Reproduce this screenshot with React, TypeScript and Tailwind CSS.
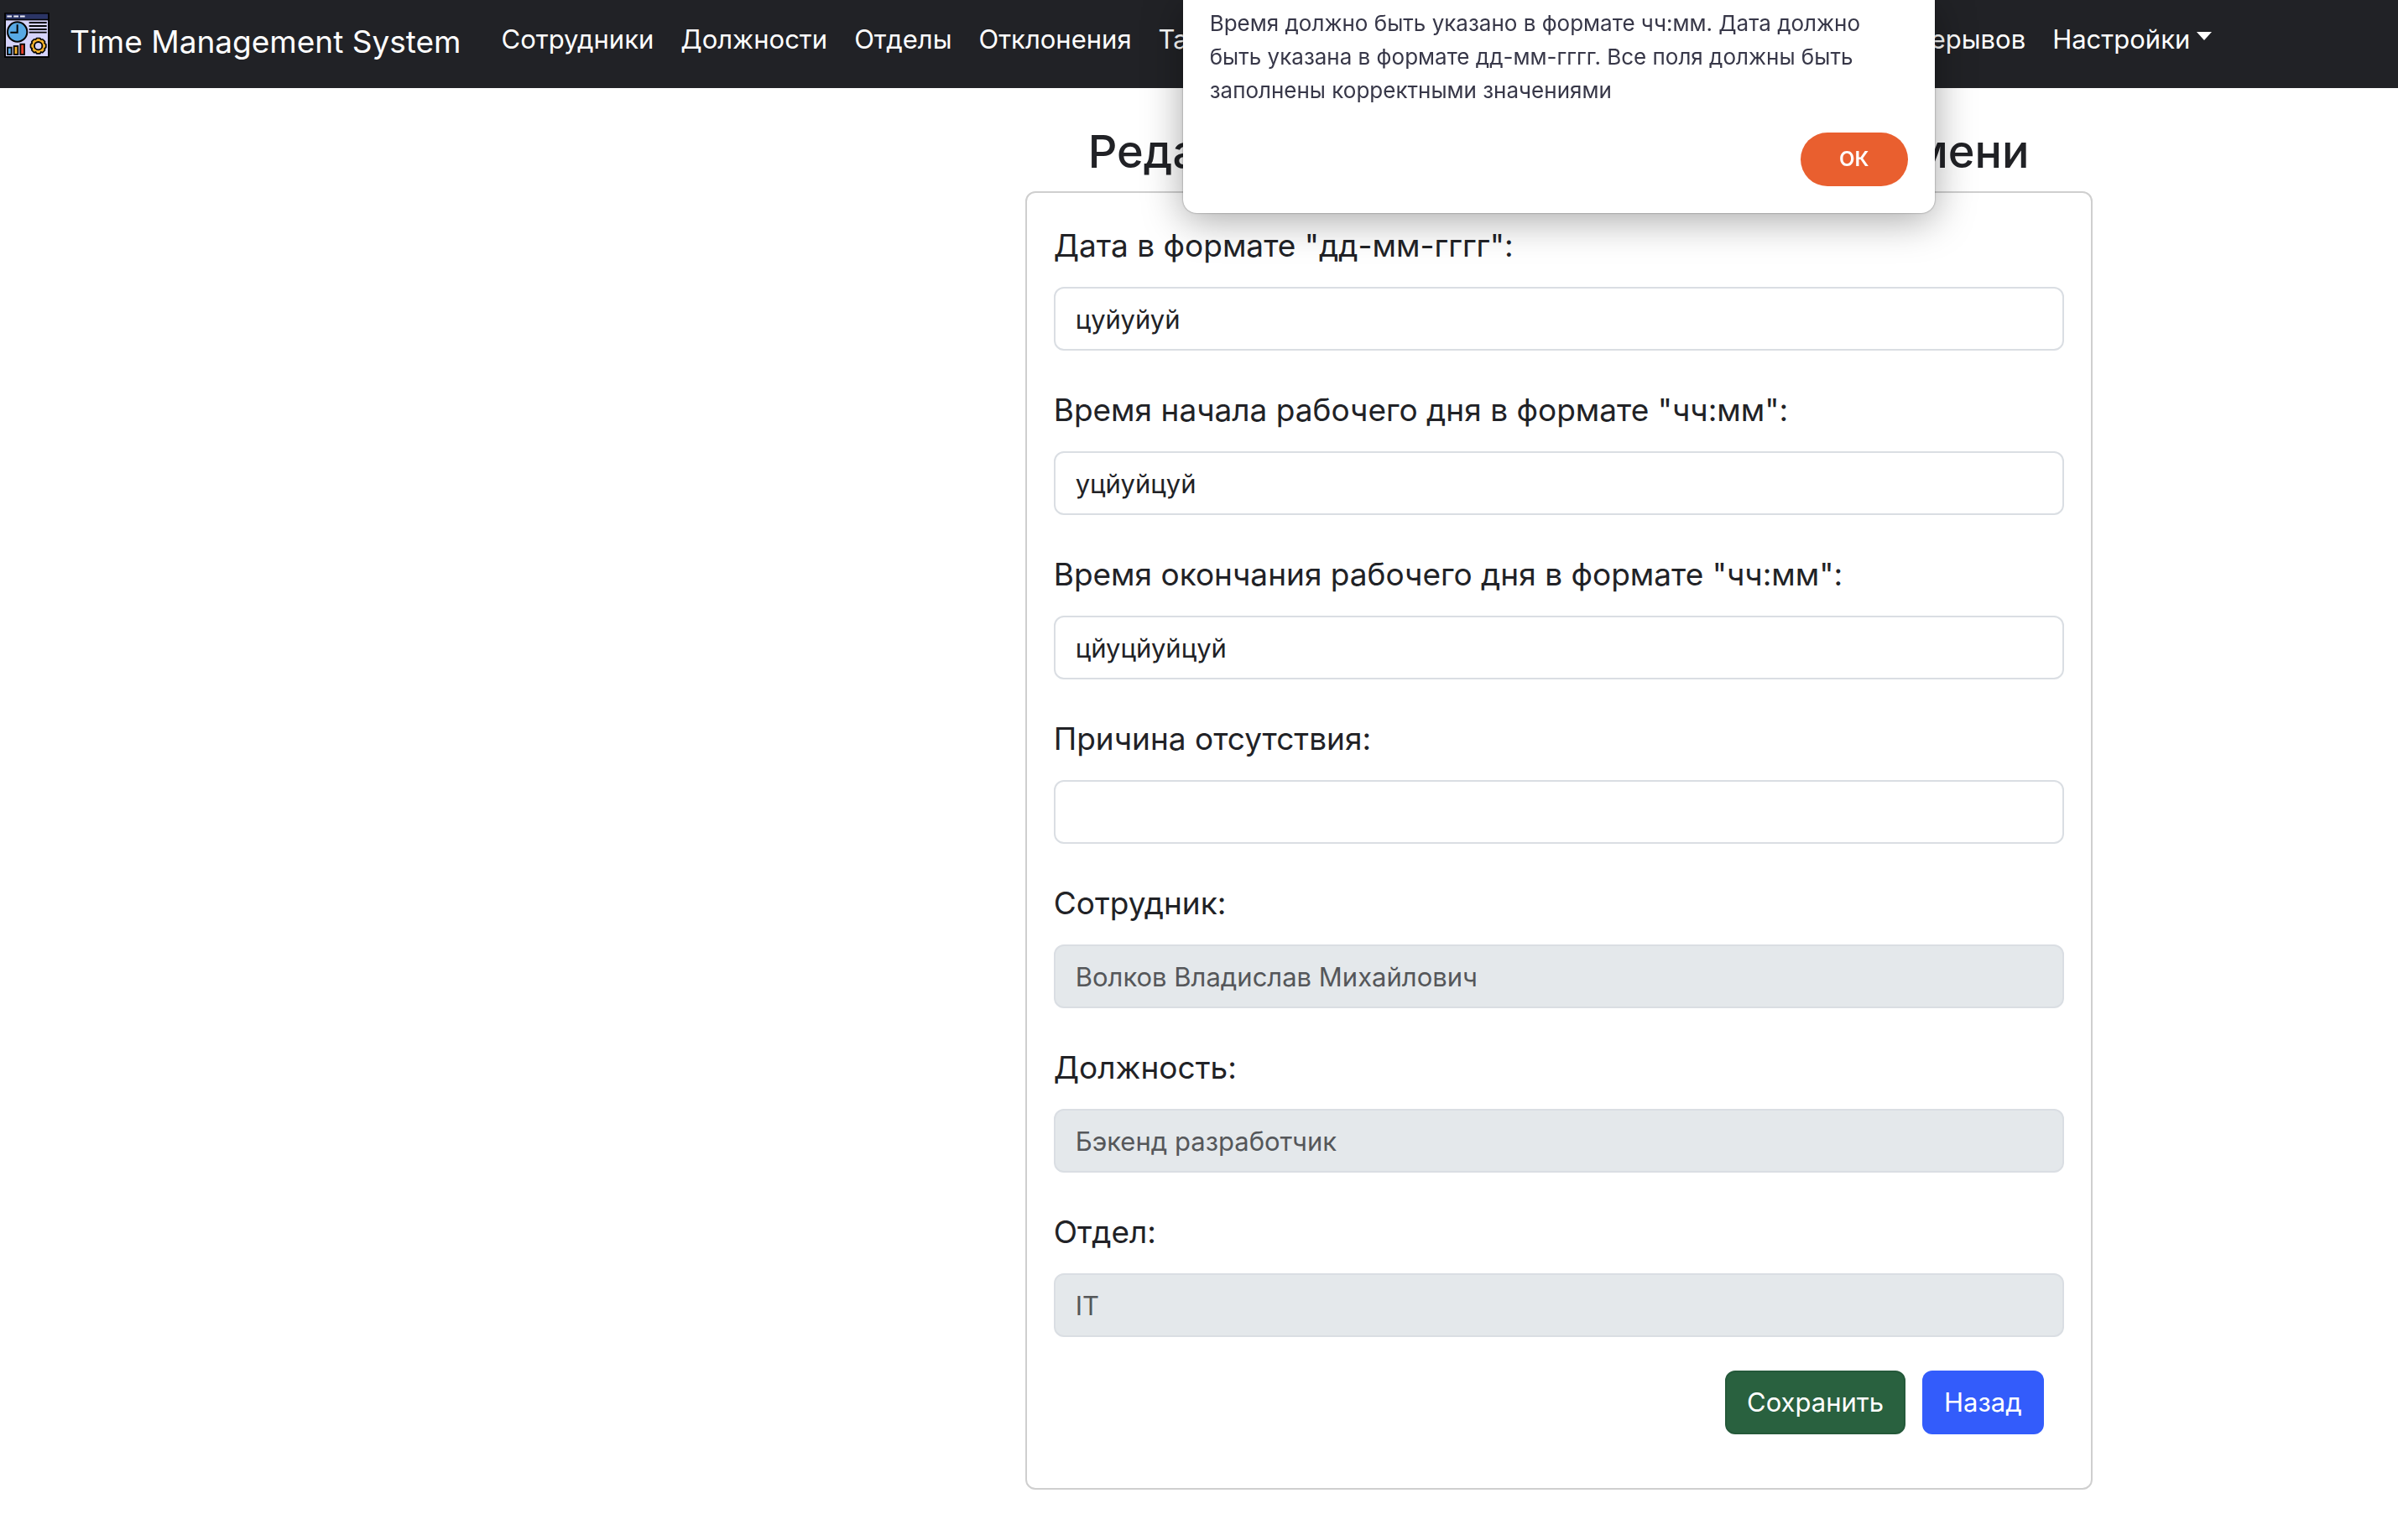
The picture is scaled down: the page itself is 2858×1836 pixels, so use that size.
import { useId, useState } from "react";

const navItems = [
  "Сотрудники",
  "Должности",
  "Отделы",
  "Отклонения",
  "Табель",
  "Графики работы",
  "Причины отклонений",
  "Виды перерывов",
];

const fields = [
  { label: 'Дата в формате "дд-мм-гггг":', value: "цуйуйуй", disabled: false },
  { label: 'Время начала рабочего дня в формате "чч:мм":', value: "уцйуйцуй", disabled: false },
  { label: 'Время окончания рабочего дня в формате "чч:мм":', value: "цйуцйуйцуй", disabled: false },
  { label: "Причина отсутствия:", value: "", disabled: false },
  { label: "Сотрудник:", value: "Волков Владислав Михайлович", disabled: true },
  { label: "Должность:", value: "Бэкенд разработчик", disabled: true },
  { label: "Отдел:", value: "IT", disabled: true },
];

const gearTeeth = [0, 45, 90, 135, 180, 225, 270, 315];

function Logo() {
  return (
    <svg viewBox="15 15 162 162" className="size-[54px] shrink-0" aria-hidden="true">
      <rect x="15" y="15" width="162" height="162" rx="3" fill="#050505" />
      <rect x="21" y="20" width="150" height="18" fill="#2b3566" />
      <rect x="21" y="43" width="150" height="128" fill="#d5d3fb" />
      <path d="M25 28.500h17M49 28.500h17M72 28.500h17" stroke="#ececf4" strokeWidth="6" />
      <circle cx="62" cy="84" r="35" fill="#58a9e4" stroke="#050505" strokeWidth="6" />
      <path d="M62 58v28H37" fill="none" stroke="#050505" strokeWidth="6" />
      <path d="M104 51h63M104 63h63M104 75h63M104 86h63" stroke="#050505" strokeWidth="5.500" />
      <g stroke="#050505" strokeWidth="5.500">
        <rect x="27" y="140" width="14" height="25" fill="#58a9e4" />
        <rect x="50" y="135" width="14" height="30" fill="#f5b22d" />
        <rect x="73" y="128" width="14" height="37" fill="#e8412a" />
      </g>
      <g stroke="#050505" strokeWidth="10" fill="#050505" strokeLinejoin="round">
        {gearTeeth.map((a) => (
          <path key={a} d="M132 109h10l3 10h-16z" transform={`rotate(${a} 137 134)`} />
        ))}
      </g>
      <circle cx="137" cy="134" r="26" fill="#050505" />
      <circle cx="137" cy="134" r="22" fill="#f5b22d" />
      <g fill="#f5b22d">
        {gearTeeth.map((a) => (
          <path key={a} d="M132 109h10l4 10h-18z" transform={`rotate(${a} 137 134)`} />
        ))}
      </g>
      <circle cx="137" cy="134" r="14" fill="#d5d3fb" stroke="#050505" strokeWidth="5.500" />
    </svg>
  );
}

function Field({ label, value, disabled }: { label: string; value: string; disabled: boolean }) {
  const id = useId();
  return (
    <div className="flex flex-col gap-[22px]">
      <label htmlFor={id} className="text-[37px] leading-[54px]">
        {label}
      </label>
      <input
        id={id}
        type="text"
        defaultValue={value}
        disabled={disabled}
        className="h-[76px] w-full rounded-xl border-2 border-[#dadee3] bg-white px-6 text-[31px] text-[#212226] disabled:bg-[#e4e8eb] disabled:text-[#55575a]"
      />
    </div>
  );
}

export default function App() {
  const [open, setOpen] = useState(true);
  return (
    <div className="min-h-screen bg-white font-['Inter',sans-serif] text-[#212226]">
      <header className="flex h-[105px] items-start gap-12 bg-[#212226] pt-[15px] pl-[5px] whitespace-nowrap text-white">
        <a href="#home" className="flex items-start gap-6">
          <Logo />
          <span className="mt-2 text-[37px] leading-[54px]">Time Management System</span>
        </a>
        <nav className="mt-2 flex gap-8 text-[31px] leading-[48px]">
          {navItems.map((item) => (
            <a key={item} href="#section">
              {item}
            </a>
          ))}
          <button type="button" className="flex items-center gap-2">
            Настройки
            <svg viewBox="0 0 18 10" className="mb-2 h-[10px] w-[18px]" aria-hidden="true">
              <path d="M0 0h18l-9 10z" fill="currentColor" />
            </svg>
          </button>
        </nav>
      </header>

      <main className="ml-[30%] flex flex-col items-center pt-[42px]">
        <h1 className="mb-[13px] text-[54px] leading-[68px] font-medium">
          Редактирование учета рабочего времени
        </h1>
        <form
          onSubmit={(e) => e.preventDefault()}
          className="w-full max-w-[1272px] rounded-xl border-2 border-[#cfcfcf] px-8 pt-9 pb-16"
        >
          <div className="flex flex-col gap-11">
            {fields.map((f) => (
              <Field key={f.label} {...f} />
            ))}
          </div>
          <div className="mt-10 mr-6 flex justify-end gap-5 text-[31px] text-white">
            <button type="submit" className="h-[76px] rounded-xl border-2 border-[#25593a] bg-[#29613f] px-6">
              Сохранить
            </button>
            <button type="button" className="h-[76px] rounded-xl bg-[#335cfb] px-[26px]">
              Назад
            </button>
          </div>
        </form>
      </main>

      {open && (
        <div className="pointer-events-none fixed top-0 right-0 left-[30%] flex justify-center">
          <div
            role="alertdialog"
            aria-describedby="alert-text"
            className="pointer-events-auto flex w-[896px] flex-col items-end gap-[30px] rounded-b-2xl bg-white px-8 pt-2 pb-8 shadow-[0_0_2px_rgba(0,0,0,0.5),0_8px_48px_rgba(0,0,0,0.35)]"
          >
            <p id="alert-text" className="w-full text-[26px] leading-10 text-[#373748]">
              Время должно быть указано в формате чч:мм. Дата должно быть указана в формате
              дд-мм-гггг. Все поля должны быть заполнены корректными значениями
            </p>
            <button
              type="button"
              onClick={() => setOpen(false)}
              className="h-16 w-32 rounded-full bg-[#e95f2f] text-[24px] font-semibold text-white"
            >
              ОК
            </button>
          </div>
        </div>
      )}
    </div>
  );
}
